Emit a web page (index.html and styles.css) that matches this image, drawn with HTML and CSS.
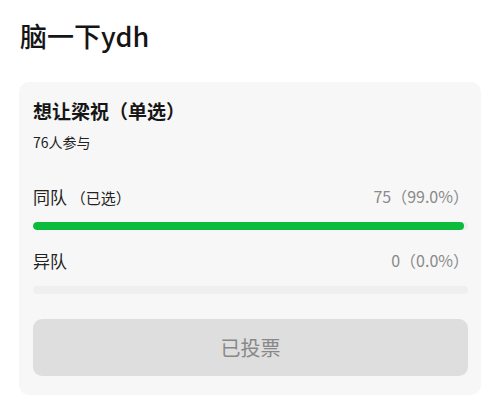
FILE: index.html
```html
<!DOCTYPE html>
<html lang="zh-CN">
<head>
<meta charset="utf-8">
<link rel="stylesheet" href="styles.css">
</head>
<body>
<div class="page">
  <h1 class="page-title">脑一下ydh</h1>
  <div class="card">
    <div class="vote-title">想让梁祝（单选）</div>
    <div class="vote-count">76人参与</div>
    <div class="option first">
      <div class="option-row">
        <span class="option-name">同队 <span class="chosen">（已选）</span></span>
        <span class="option-stat">75（99.0%）</span>
      </div>
      <div class="track"><div class="fill" style="width:99%"></div></div>
    </div>
    <div class="option">
      <div class="option-row">
        <span class="option-name">异队</span>
        <span class="option-stat">0（0.0%）</span>
      </div>
      <div class="track"><div class="fill" style="width:0%"></div></div>
    </div>
    <div class="vote-btn">已投票</div>
  </div>
</div>
</body>
</html>
```
FILE: styles.css
```css
* { box-sizing: border-box; }
html, body { margin: 0; padding: 0; background: #ffffff; }
body {
  font-family: "Noto Sans CJK SC", "Noto Sans", sans-serif;
  color: #1a1a1a;
}
.page {
  width: 500px;
  height: 414px;
  padding: 17px 19px 0 19px;
  overflow: hidden;
}
.page-title {
  margin: 0 0 0 1px;
  font-size: 27px;
  line-height: 37px;
  font-weight: 500;
  color: #151515;
}
.card {
  margin-top: 28px;
  background: #f7f7f7;
  border-radius: 10px;
  padding: 16px 13px 19px 14px;
  display: flex;
  flex-direction: column;
}
.vote-title {
  font-size: 19px;
  line-height: 26px;
  font-weight: 700;
  color: #161616;
}
.vote-count {
  margin-top: 8px;
  font-size: 14px;
  line-height: 20px;
  color: #222;
}
.option {
  display: flex;
  flex-direction: column;
  margin-top: 18px;
}
.option.first { margin-top: 32px; }
.option-row {
  display: flex;
  justify-content: space-between;
  align-items: center;
  height: 24px;
}
.option-name {
  font-size: 17px;
  color: #222;
}
.chosen { font-size: 15px; }
.option-stat {
  font-size: 16px;
  color: #8a8a8a;
  margin-right: -1px;
}
.track {
  margin-top: 14px;
  height: 8px;
  border-radius: 4px;
  background: #efefef;
  overflow: hidden;
}
.fill {
  height: 100%;
  background: #0abb3c;
  border-radius: 4px;
}
.vote-btn {
  margin-top: 25px;
  height: 57px;
  border-radius: 9px;
  background: #dedede;
  color: #888;
  font-size: 20px;
  display: flex;
  align-items: center;
  justify-content: center;
}
```
